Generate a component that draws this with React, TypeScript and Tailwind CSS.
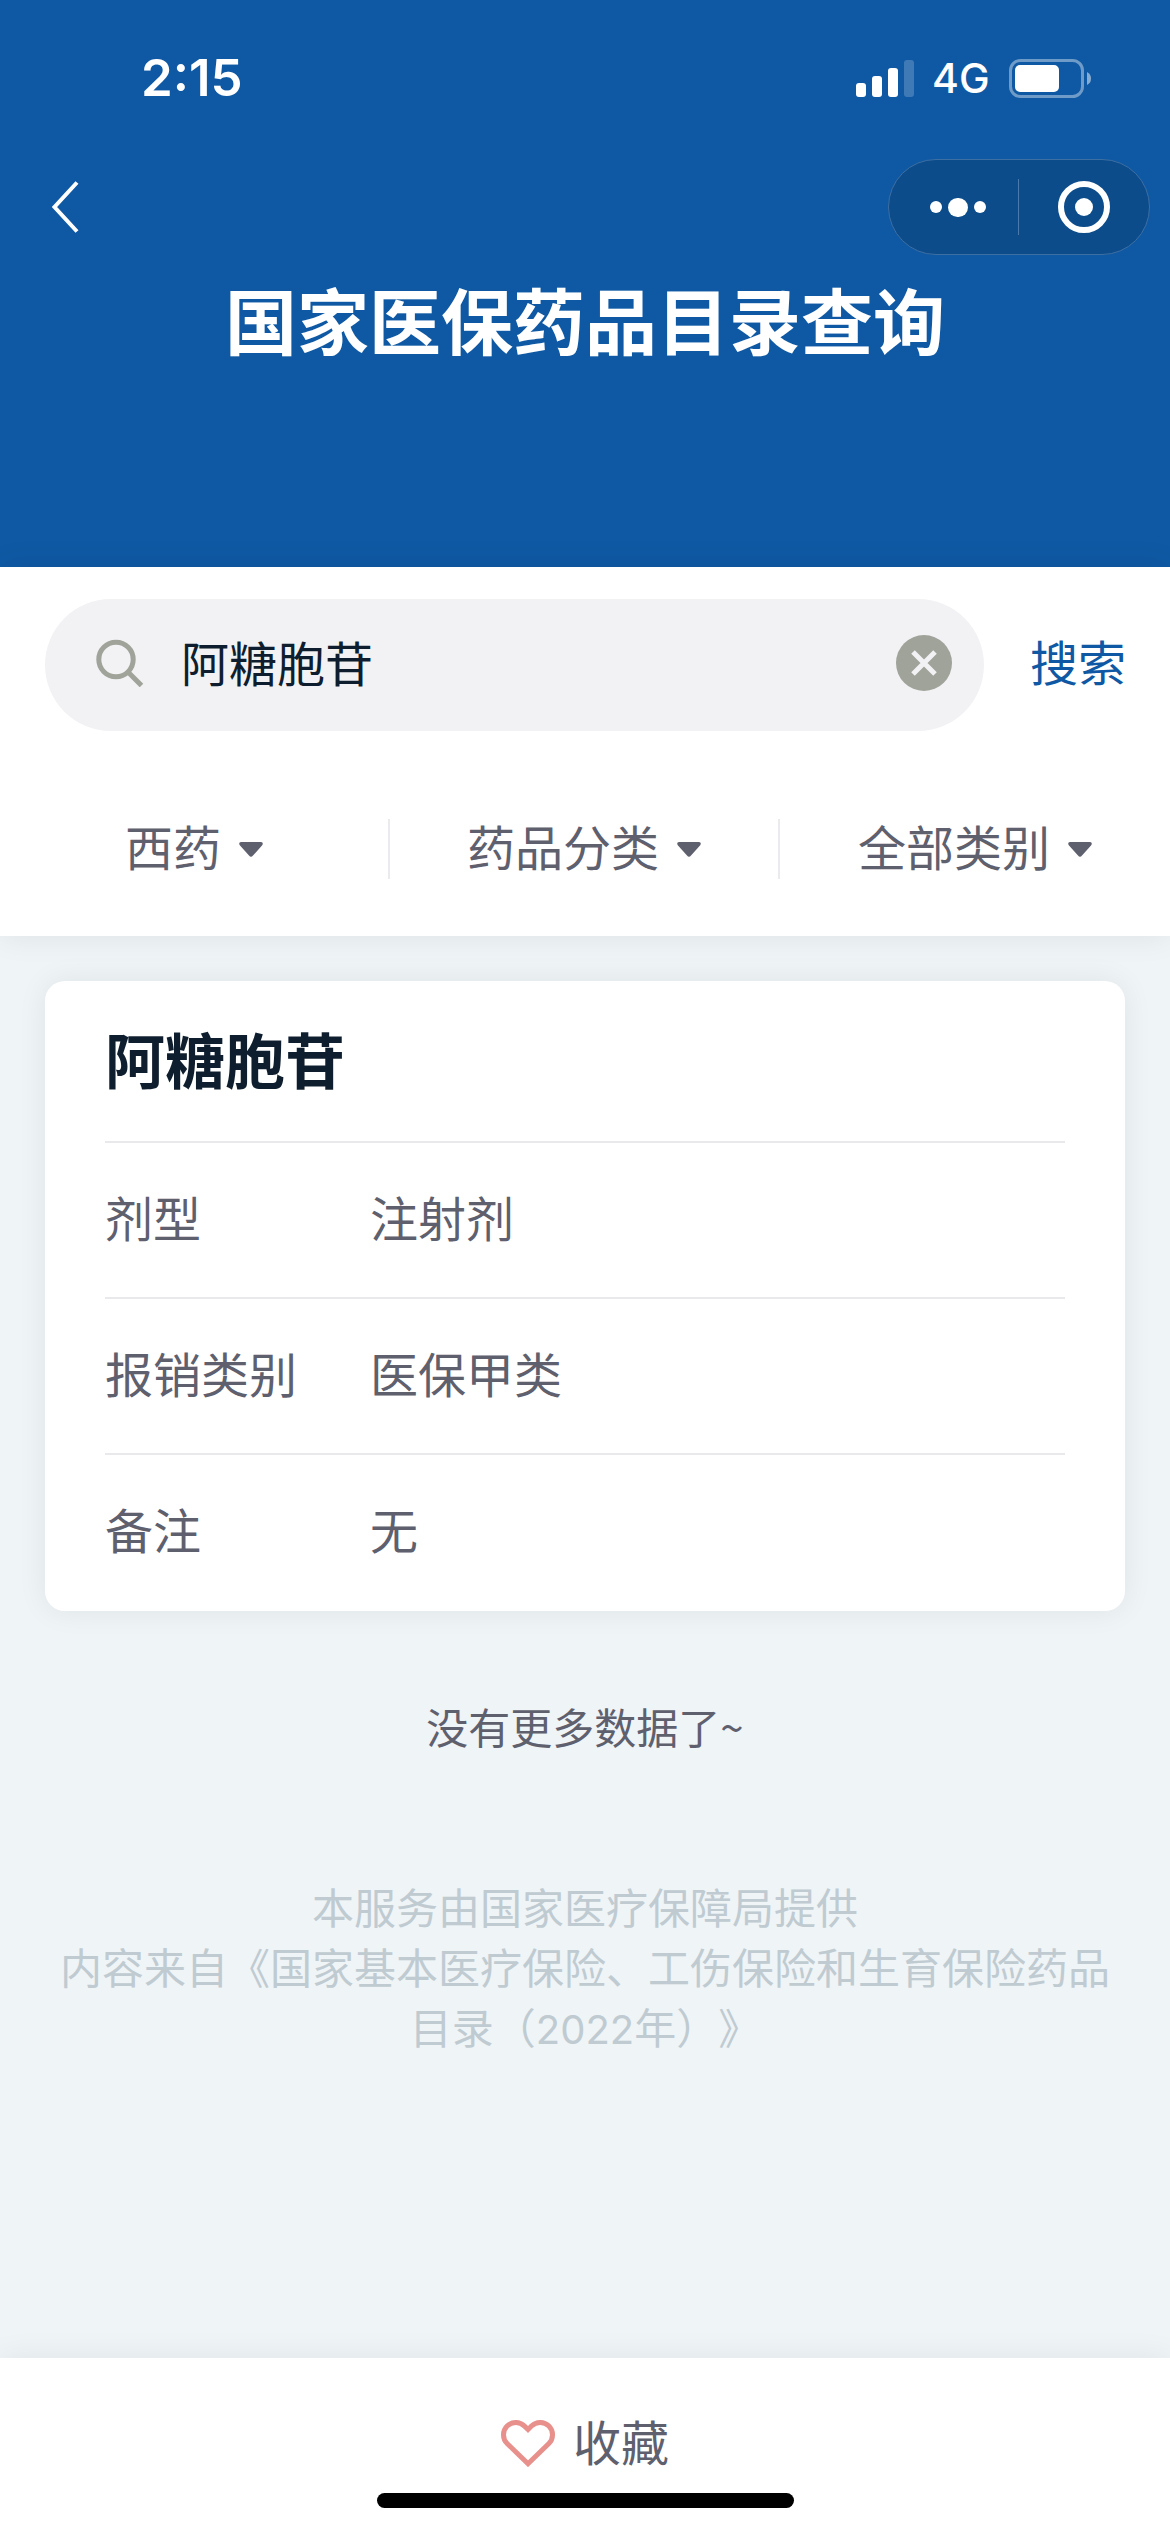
const filters = ["西药", "药品分类", "全部类别"];

const drug = {
  name: "阿糖胞苷",
  fields: [
    { label: "剂型", value: "注射剂" },
    { label: "报销类别", value: "医保甲类" },
    { label: "备注", value: "无" },
  ],
};

export default function App() {
  return (
    <div className="flex h-[2532px] w-[1170px] flex-col overflow-hidden bg-[#eff4f7] font-['Noto_Sans_CJK_SC',sans-serif] text-[48px] leading-[72px] text-[#5f606e]">
      <header className="h-[567px] shrink-0 bg-[#0f59a4] text-white">
        <StatusBar />
        <NavBar />
        <h1 className="mt-2 text-center text-[72px] leading-[104px] font-bold">国家医保药品目录查询</h1>
      </header>

      <section className="z-10 h-[369px] shrink-0 bg-white pt-8 shadow-[0_0_30px_rgba(0,0,0,0.08)]">
        <SearchBar keyword={drug.name} />
        <div className="mt-[88px] grid h-[60px] grid-cols-3">
          {filters.map((name) => (
            <FilterItem key={name} name={name} />
          ))}
        </div>
      </section>

      <main className="flex-1 px-[45px] pt-[45px]">
        <DrugCard />
        <p className="mt-[85px] text-center text-[42px] leading-[60px]">没有更多数据了~</p>
        <p className="mt-[120px] text-center text-[42px] leading-[60px] text-[#bfcbd1] [text-spacing-trim:space-all]">
          本服务由国家医疗保障局提供
          <br />
          内容来自《国家基本医疗保险、工伤保险和生育保险药品
          <br />
          目录（<span className="font-['Inter',sans-serif] text-[40px]">2022</span>年）》
        </p>
      </main>

      <footer className="flex h-[174px] shrink-0 flex-col items-center bg-white pt-[49px] shadow-[0_0_30px_rgba(0,0,0,0.07)]">
        <button className="flex h-[72px] items-center gap-[18px]">
          <HeartIcon />
          <span className="pb-1.5">收藏</span>
        </button>
        <div className="mt-[14px] h-[15px] w-[417px] rounded-full bg-black" />
      </footer>
    </div>
  );
}

function StatusBar() {
  return (
    <div className="flex h-[156px] items-center justify-between pr-[79px] pl-[141px] font-['Inter',sans-serif]">
      <span className="text-[51px] font-semibold">2:15</span>
      <div className="flex items-center">
        <svg width="58" height="37" viewBox="0 0 58 37" fill="#fff">
          <rect x="0" y="23" width="10" height="14" rx="3" />
          <rect x="16" y="16" width="10" height="21" rx="3" />
          <rect x="32" y="8" width="10" height="29" rx="3" />
          <rect x="48" y="0" width="10" height="37" rx="3" opacity="0.2" />
        </svg>
        <span className="ml-[18px] w-[58px] text-[41px] font-medium">4G</span>
        <svg className="ml-[19px]" width="82" height="39" viewBox="0 0 82 39">
          <rect x="1.5" y="1.5" width="72" height="36" rx="10" fill="none" stroke="#fff" strokeWidth="3" opacity="0.4" />
          <rect x="6" y="6" width="44" height="27" rx="5" fill="#fff" />
          <path d="M78 13 Q82 15 82 19.5 T78 26 Z" fill="#fff" opacity="0.5" />
        </svg>
      </div>
    </div>
  );
}

function NavBar() {
  return (
    <div className="flex h-[102px] items-center justify-between pr-5 pl-[51px]">
      <svg width="28" height="52" viewBox="0 0 28 52" fill="none" stroke="#fff" strokeWidth="4">
        <path d="M26 1.500 L3.500 26 L26 50.500" />
      </svg>
      <div className="flex h-24 w-[262px] items-center rounded-full border border-[#3d6fa3] bg-[#0c4c8a]">
        <div className="flex flex-1 items-center justify-center gap-1.5 pl-2">
          <i className="h-3 w-3 rounded-full bg-white" />
          <i className="h-[19px] w-5 rounded-full bg-white" />
          <i className="h-3 w-3 rounded-full bg-white" />
        </div>
        <div className="h-14 w-px bg-[#4a7aac]" />
        <div className="flex w-[130px] justify-center">
          <div className="flex h-[52px] w-[52px] items-center justify-center rounded-full border-6 border-white">
            <i className="h-[18px] w-[18px] rounded-full bg-white" />
          </div>
        </div>
      </div>
    </div>
  );
}

function SearchBar({ keyword }: { keyword: string }) {
  return (
    <div className="flex items-center pl-[45px]">
      <div className="flex h-[132px] w-[939px] items-center rounded-full bg-[#f2f2f5] pr-8 pl-[51px]">
        <svg className="-mt-1" width="48" height="48" viewBox="0 0 48 48" fill="none" stroke="#a0a399" strokeWidth="5">
          <circle cx="20" cy="20.500" r="17.200" />
          <path d="M32 33 L45.500 46.500" />
        </svg>
        <span className="ml-[37px] flex-1 pb-2 text-[#0f1e2e]">{keyword}</span>
        <svg className="-mt-1" width="56" height="56" viewBox="0 0 56 56">
          <circle cx="28" cy="28" r="28" fill="#a0a399" />
          <path d="M17 17 L39 39 M39 17 L17 39" stroke="#f2f2f5" strokeWidth="5" />
        </svg>
      </div>
      <button className="ml-[46px] pb-2.5 text-[#0f59a4]">搜索</button>
    </div>
  );
}

function FilterItem({ name }: { name: string }) {
  return (
    <div className="flex h-[60px] items-center justify-center gap-[18px] border-r-2 border-[#ebebee] last:border-r-0">
      <span className="pb-2 leading-[52px]">{name}</span>
      <svg width="24" height="15" viewBox="0 0 24 15" fill="#5f606e">
        <path d="M2 0 H22 Q25 0.500 23 3.500 L14 13.500 Q12 16 10 13.500 L1 3.500 Q-1 0.500 2 0 Z" />
      </svg>
    </div>
  );
}

function DrugCard() {
  return (
    <div className="h-[630px] rounded-[20px] bg-white px-15 shadow-[0_0_30px_rgba(0,0,0,0.07)]">
      <h2 className="flex h-[160px] items-center pb-1.5 text-[60px] font-bold text-[#0f1e2e]">{drug.name}</h2>
      {drug.fields.map((field) => (
        <div key={field.label} className="flex h-[156px] items-center border-t-2 border-[#e9e9eb] pb-2">
          <span className="w-[265px]">{field.label}</span>
          <span>{field.value}</span>
        </div>
      ))}
    </div>
  );
}

function HeartIcon() {
  return (
    <svg width="54" height="47" viewBox="0 0 54 47" fill="none" stroke="#e8918c" strokeWidth="5">
      <path d="M27 9.500 L23.500 6.100 A12.300 12.300 0 0 0 6.100 23.500 L27 43.700 L47.900 23.500 A12.300 12.300 0 0 0 30.500 6.100 Z" />
    </svg>
  );
}
